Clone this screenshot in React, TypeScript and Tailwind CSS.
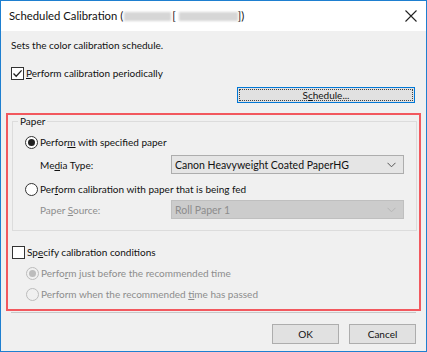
import React from 'react';

const FONT = { fontFamily: 'Lato, "Noto Sans", sans-serif' };

function CheckBox({ checked }: { checked?: boolean }) {
    return (
        <span className="w-[13px] h-[13px] border border-[#333333] bg-white flex items-center justify-center shrink-0">
            {checked && (
                <svg width="11" height="11" viewBox="0 0 11 11">
                    <path d="M1.5 5.5 L4.2 8.3 L9.6 2.4" fill="none" stroke="#222" strokeWidth="1.3" />
                </svg>
            )}
        </span>
    );
}

function Radio({ checked, disabled }: { checked?: boolean; disabled?: boolean }) {
    return (
        <span
            className={`w-[13px] h-[13px] rounded-full border flex items-center justify-center shrink-0 ${
                disabled ? 'border-[#bcbcbc] bg-[#f0f0f0]' : 'border-[#333333] bg-white'
            }`}
        >
            {checked && <span className={`w-[7px] h-[7px] rounded-full ${disabled ? 'bg-[#bcbcbc]' : 'bg-[#222]'}`} />}
        </span>
    );
}

function Select({ value, disabled }: { value: string; disabled?: boolean }) {
    return (
        <div
            className={`w-[233px] h-[19px] border flex items-center justify-between pl-[3px] pr-[7px] text-[10.5px] ${
                disabled ? 'bg-[#cccccc] border-[#bfbfbf] text-[#8d8d8d]' : 'bg-[#e5e5e5] border-[#adadad] text-[#111]'
            }`}
        >
            <span>{value}</span>
            <svg width="9" height="6" viewBox="0 0 9 6">
                <path d="M0.5 0.8 L4.5 4.8 L8.5 0.8" fill="none" stroke={disabled ? '#b5b5b5' : '#555'} strokeWidth="1" />
            </svg>
        </div>
    );
}

export default function App() {
    return (
        <div
            className="w-[427px] h-[352px] border border-[#1e7fd0] bg-[#f0f0f0] flex flex-col text-[10px] leading-[16px] text-[#111]"
            style={FONT}
        >
            {/* title bar */}
            <div className="h-[30px] bg-white flex items-center justify-between pl-[8px] pr-[9px] shrink-0">
                <div className="flex items-center text-[11.3px] text-[#111]">
                    <span>Scheduled Calibration (</span>
                    <span className="w-[47px] h-[9px] bg-[#d6d6d6] blur-[1px] mx-[1px]" />
                    <span>[</span>
                    <span className="w-[59px] h-[9px] bg-[#d6d6d6] blur-[1px] ml-[3px]" />
                    <span>])</span>
                </div>
                <svg width="12" height="12" viewBox="0 0 12 12">
                    <path d="M0.5 0.5 L11.5 11.5 M11.5 0.5 L0.5 11.5" stroke="#222" strokeWidth="1.1" />
                </svg>
            </div>

            <div className="flex flex-col px-[10px] pt-[6px]">
                <div>Sets the color calibration schedule.</div>
                <label className="flex items-center gap-[2px] mt-[12px]">
                    <CheckBox checked />
                    <span>
                        <u>P</u>erform calibration periodically
                    </span>
                </label>
                <div className="flex justify-end mt-[6px] pr-[1px]">
                    <button className="w-[178px] h-[16px] border border-[#0078d7] bg-[#e1e1e1] flex items-center justify-center p-[1px]">
                        <span className="w-full h-full border border-dotted border-[#444] flex items-center justify-center">
                            S<u>c</u>hedule...
                        </span>
                    </button>
                </div>
            </div>

            {/* highlighted region */}
            <div className="ml-[5px] mr-[5px] mt-[10px] h-[198px] border-2 border-[#f2585e] flex flex-col pl-[4px] pr-[2px]">
                <fieldset className="border border-[#dcdcdc] pl-[12px] pr-[12px] pb-[11px]">
                    <legend className="px-[2px] -ml-[7px] leading-[12px]">Paper</legend>
                    <label className="flex items-center gap-[2px] mt-[7px]">
                        <Radio checked />
                        <span>
                            Perfor<u>m</u> with specified paper
                        </span>
                    </label>
                    <div className="flex items-center justify-between mt-[5px] pl-[15px]">
                        <span>
                            Me<u>d</u>ia Type:
                        </span>
                        <Select value="Canon Heavyweight Coated PaperHG" />
                    </div>
                    <label className="flex items-center gap-[2px] mt-[7px]">
                        <Radio />
                        <span>
                            Per<u>f</u>orm calibration with paper that is being fed
                        </span>
                    </label>
                    <div className="flex items-center justify-between mt-[3px] pl-[15px] text-[#8d8d8d]">
                        <span>
                            Paper <u>S</u>ource:
                        </span>
                        <Select value="Roll Paper 1" disabled />
                    </div>
                </fieldset>

                <label className="flex items-center gap-[2px] mt-[13px]">
                    <CheckBox />
                    <span>
                        Sp<u>e</u>cify calibration conditions
                    </span>
                </label>
                <div className="flex flex-col pl-[14px] text-[#8d8d8d]">
                    <label className="flex items-center gap-[2px] mt-[5px]">
                        <Radio checked disabled />
                        <span>
                            Perfo<u>r</u>m just before the recommended time
                        </span>
                    </label>
                    <label className="flex items-center gap-[2px] mt-[5px]">
                        <Radio disabled />
                        <span>
                            Perform when the recommended <u>t</u>ime has passed
                        </span>
                    </label>
                </div>
            </div>

            <div className="mx-[10px] mt-[1px] h-px bg-[#c8c8c8]" />

            <div className="flex justify-end gap-[10px] pr-[10px] mt-[11px]">
                <button className="w-[67px] h-[20px] border border-[#adadad] bg-[#e1e1e1]">OK</button>
                <button className="w-[67px] h-[20px] border border-[#adadad] bg-[#e1e1e1]">Cancel</button>
            </div>
        </div>
    );
}
